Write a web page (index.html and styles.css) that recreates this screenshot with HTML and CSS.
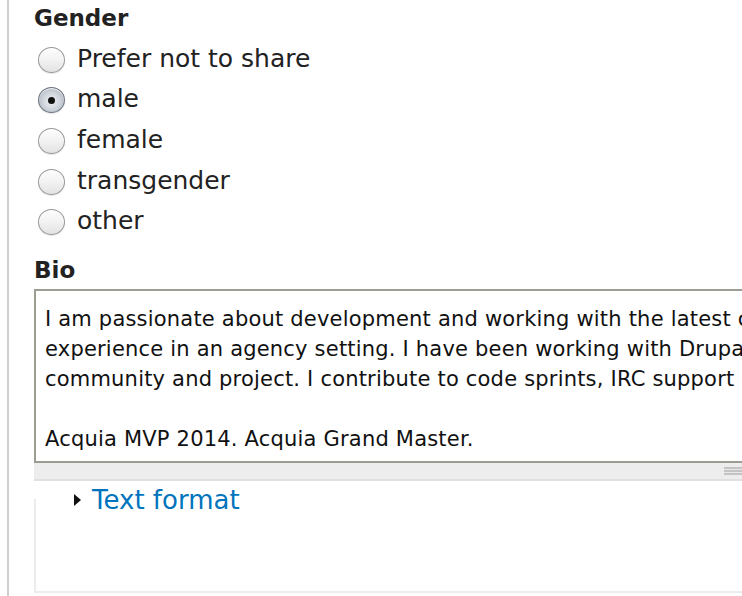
FILE: index.html
```html
<!DOCTYPE html>
<html>
<head>
<meta charset="utf-8">
<link rel="stylesheet" href="styles.css">
</head>
<body>
<div class="page">
  <div class="field gender">
    <div class="label">Gender</div>
    <div class="options">
      <label class="option"><span class="radio"></span><span class="opt-text">Prefer not to share</span></label>
      <label class="option"><span class="radio checked"></span><span class="opt-text">male</span></label>
      <label class="option"><span class="radio"></span><span class="opt-text">female</span></label>
      <label class="option"><span class="radio"></span><span class="opt-text">transgender</span></label>
      <label class="option"><span class="radio"></span><span class="opt-text">other</span></label>
    </div>
  </div>
  <div class="field bio">
    <div class="label">Bio</div>
    <div class="textarea">
      <div class="line">I am passionate about development and working with the latest cutting edge technologies. I have</div>
      <div class="line">experience in an agency setting. I have been working with Drupal for many years and love the</div>
      <div class="line">community and project. I contribute to code sprints, IRC support and the issue queues.</div>
      <div class="line">&nbsp;</div>
      <div class="line">Acquia MVP 2014. Acquia Grand Master.</div>
    </div>
    <div class="grippie"><span class="grip"></span></div>
    <div class="filter">
      <div class="filter-legend"><span class="arrow"></span><a class="filter-link">Text format</a></div>
    </div>
  </div>
</div>
</body>
</html>
```
FILE: styles.css
```css
html, body {
  margin: 0;
  padding: 0;
  background: #fff;
  overflow: hidden;
}
body {
  font-family: "DejaVu Sans", Verdana, sans-serif;
  color: #222;
  width: 742px;
  height: 596px;
}
.page {
  margin-left: 7px;
  border-left: 2px solid #cfcfcf;
  padding-left: 25px;
  height: 596px;
  box-sizing: border-box;
  overflow: hidden;
}
.label {
  font-weight: bold;
  font-size: 23px;
  line-height: 28px;
  color: #222;
}
.gender .label {
  padding-top: 4px;
}
.options {
  display: flex;
  flex-direction: column;
  padding-top: 6px;
}
.option {
  display: flex;
  align-items: center;
  height: 40.6px;
  padding-left: 4px;
}
.radio {
  flex: none;
  width: 27px;
  height: 26px;
  border-radius: 50%;
  box-sizing: border-box;
  border: 1px solid #9a9a9a;
  background: linear-gradient(#fdfdfd 0%, #f2f2f2 50%, #e2e2e2 100%);
  box-shadow: inset 0 1px 1px rgba(255,255,255,0.9), 0 1px 1px rgba(0,0,0,0.1);
  display: flex;
  align-items: center;
  justify-content: center;
  margin-top: 3px;
}
.radio.checked {
  background: radial-gradient(circle at 50% 55%, #f2f4f7 0%, #c9ced6 55%, #8d96a3 100%);
  border-color: #6f7782;
}
.radio.checked::after {
  content: "";
  width: 7px;
  height: 7px;
  border-radius: 50%;
  background: #111;
}
.opt-text {
  font-size: 25px;
  margin-left: 12px;
  color: #222;
}
.bio {
  margin-top: 15px;
}
.bio .label {
  margin-bottom: 5px;
}
.textarea {
  width: 760px;
  box-sizing: border-box;
  border: 2px solid #9d9d92;
  padding: 13px 9px 7px;
  font-size: 21px;
  letter-spacing: 0.2px;
  line-height: 30px;
  color: #111;
  white-space: nowrap;
  overflow: hidden;
  background: #fff;
}
.grippie {
  width: 760px;
  height: 18px;
  background: #ededed;
  border-bottom: 2px solid #e0e0e0;
  position: relative;
  box-sizing: border-box;
}
.grip {
  position: absolute;
  left: 690px;
  top: 4px;
  width: 30px;
  height: 8px;
  background: repeating-linear-gradient(#c4c4c4 0 2px, #e8e8e8 2px 3px);
}
.filter {
  width: 760px;
  height: 94px;
  border-left: 2px solid #ececec;
  border-bottom: 2px solid #ececec;
  box-sizing: border-box;
  margin-top: 18px;
  position: relative;
}
.filter-legend {
  position: absolute;
  top: -14px;
  left: 38px;
  display: flex;
  align-items: center;
  background: #fff;
  padding-right: 4px;
}
.arrow {
  width: 0;
  height: 0;
  border-top: 6px solid transparent;
  border-bottom: 6px solid transparent;
  border-left: 7px solid #111;
  margin-right: 11px;
}
.filter-link {
  font-size: 26px;
  color: #0074bd;
  text-decoration: none;
}
```
